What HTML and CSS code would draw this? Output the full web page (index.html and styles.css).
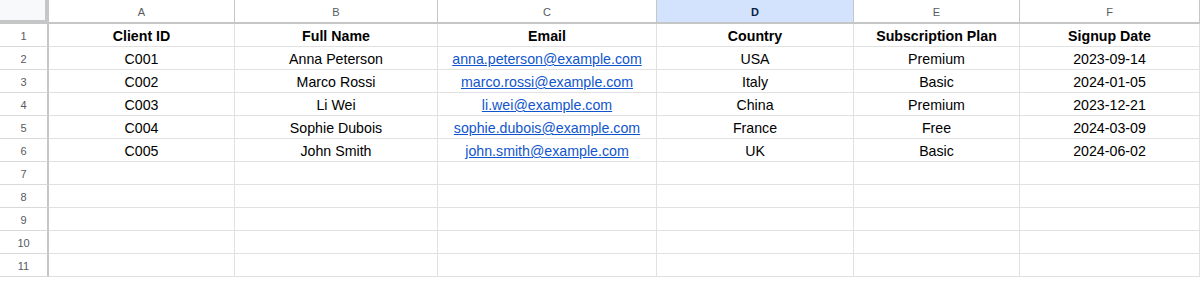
FILE: index.html
```html
<!DOCTYPE html>
<html>
<head>
<meta charset="utf-8">
<link rel="stylesheet" href="styles.css">
</head>
<body>
<div class="sheet">
  <div class="corner"></div>
  <div class="colhead">A</div>
  <div class="colhead">B</div>
  <div class="colhead">C</div>
  <div class="colhead selected">D</div>
  <div class="colhead">E</div>
  <div class="colhead">F</div>

  <div class="rowhead">1</div>
  <div class="cell bold">Client ID</div>
  <div class="cell bold">Full Name</div>
  <div class="cell bold">Email</div>
  <div class="cell bold">Country</div>
  <div class="cell bold">Subscription Plan</div>
  <div class="cell bold">Signup Date</div>

  <div class="rowhead">2</div>
  <div class="cell">C001</div>
  <div class="cell">Anna Peterson</div>
  <div class="cell"><a class="link" href="#">anna.peterson@example.com</a></div>
  <div class="cell">USA</div>
  <div class="cell">Premium</div>
  <div class="cell">2023-09-14</div>

  <div class="rowhead">3</div>
  <div class="cell">C002</div>
  <div class="cell">Marco Rossi</div>
  <div class="cell"><a class="link" href="#">marco.rossi@example.com</a></div>
  <div class="cell">Italy</div>
  <div class="cell">Basic</div>
  <div class="cell">2024-01-05</div>

  <div class="rowhead">4</div>
  <div class="cell">C003</div>
  <div class="cell">Li Wei</div>
  <div class="cell"><a class="link" href="#">li.wei@example.com</a></div>
  <div class="cell">China</div>
  <div class="cell">Premium</div>
  <div class="cell">2023-12-21</div>

  <div class="rowhead">5</div>
  <div class="cell">C004</div>
  <div class="cell">Sophie Dubois</div>
  <div class="cell"><a class="link" href="#">sophie.dubois@example.com</a></div>
  <div class="cell">France</div>
  <div class="cell">Free</div>
  <div class="cell">2024-03-09</div>

  <div class="rowhead">6</div>
  <div class="cell">C005</div>
  <div class="cell">John Smith</div>
  <div class="cell"><a class="link" href="#">john.smith@example.com</a></div>
  <div class="cell">UK</div>
  <div class="cell">Basic</div>
  <div class="cell">2024-06-02</div>

  <div class="rowhead">7</div>
  <div class="cell"></div><div class="cell"></div><div class="cell"></div><div class="cell"></div><div class="cell"></div><div class="cell"></div>
  <div class="rowhead">8</div>
  <div class="cell"></div><div class="cell"></div><div class="cell"></div><div class="cell"></div><div class="cell"></div><div class="cell"></div>
  <div class="rowhead">9</div>
  <div class="cell"></div><div class="cell"></div><div class="cell"></div><div class="cell"></div><div class="cell"></div><div class="cell"></div>
  <div class="rowhead">10</div>
  <div class="cell"></div><div class="cell"></div><div class="cell"></div><div class="cell"></div><div class="cell"></div><div class="cell"></div>
  <div class="rowhead">11</div>
  <div class="cell"></div><div class="cell"></div><div class="cell"></div><div class="cell"></div><div class="cell"></div><div class="cell"></div>
</div>
</body>
</html>
```

FILE: styles.css
```css
html, body {
  margin: 0;
  padding: 0;
  background: #ffffff;
}

.sheet {
  display: grid;
  grid-template-columns: 49px 186px 203px 219px 197px 166px 1fr;
  grid-template-rows: 24px repeat(11, 23px) 1fr;
  width: 1200px;
  height: 281px;
  overflow: hidden;
  font-family: "Liberation Sans", Arial, sans-serif;
}

.sheet > div {
  box-sizing: border-box;
  display: flex;
  align-items: center;
  justify-content: center;
  white-space: nowrap;
  overflow: hidden;
}

.corner {
  background: #f8f9fa;
  border-right: 4px solid #c4c7c5;
  border-bottom: 4px solid #c4c7c5;
}

.colhead {
  background: #ffffff;
  color: #575b5f;
  font-size: 11px;
  border-right: 1px solid #c4c7c5;
  border-bottom: 2px solid #c4c7c5;
  padding-top: 2px;
}

.colhead.selected {
  background: #d3e3fd;
  color: #0b1f44;
  font-weight: bold;
}

.rowhead {
  background: #ffffff;
  color: #575b5f;
  font-size: 11px;
  border-right: 2px solid #c4c7c5;
  border-bottom: 1px solid #d9d9d9;
  padding-top: 1px;
}

.cell {
  color: #000000;
  font-size: 14.2px;
  border-right: 1px solid #e1e1e1;
  border-bottom: 1px solid #e1e1e1;
  padding-top: 2px;
}

.bold {
  font-weight: bold;
}

.link {
  color: #1155cc;
  text-decoration: underline;
}
```
